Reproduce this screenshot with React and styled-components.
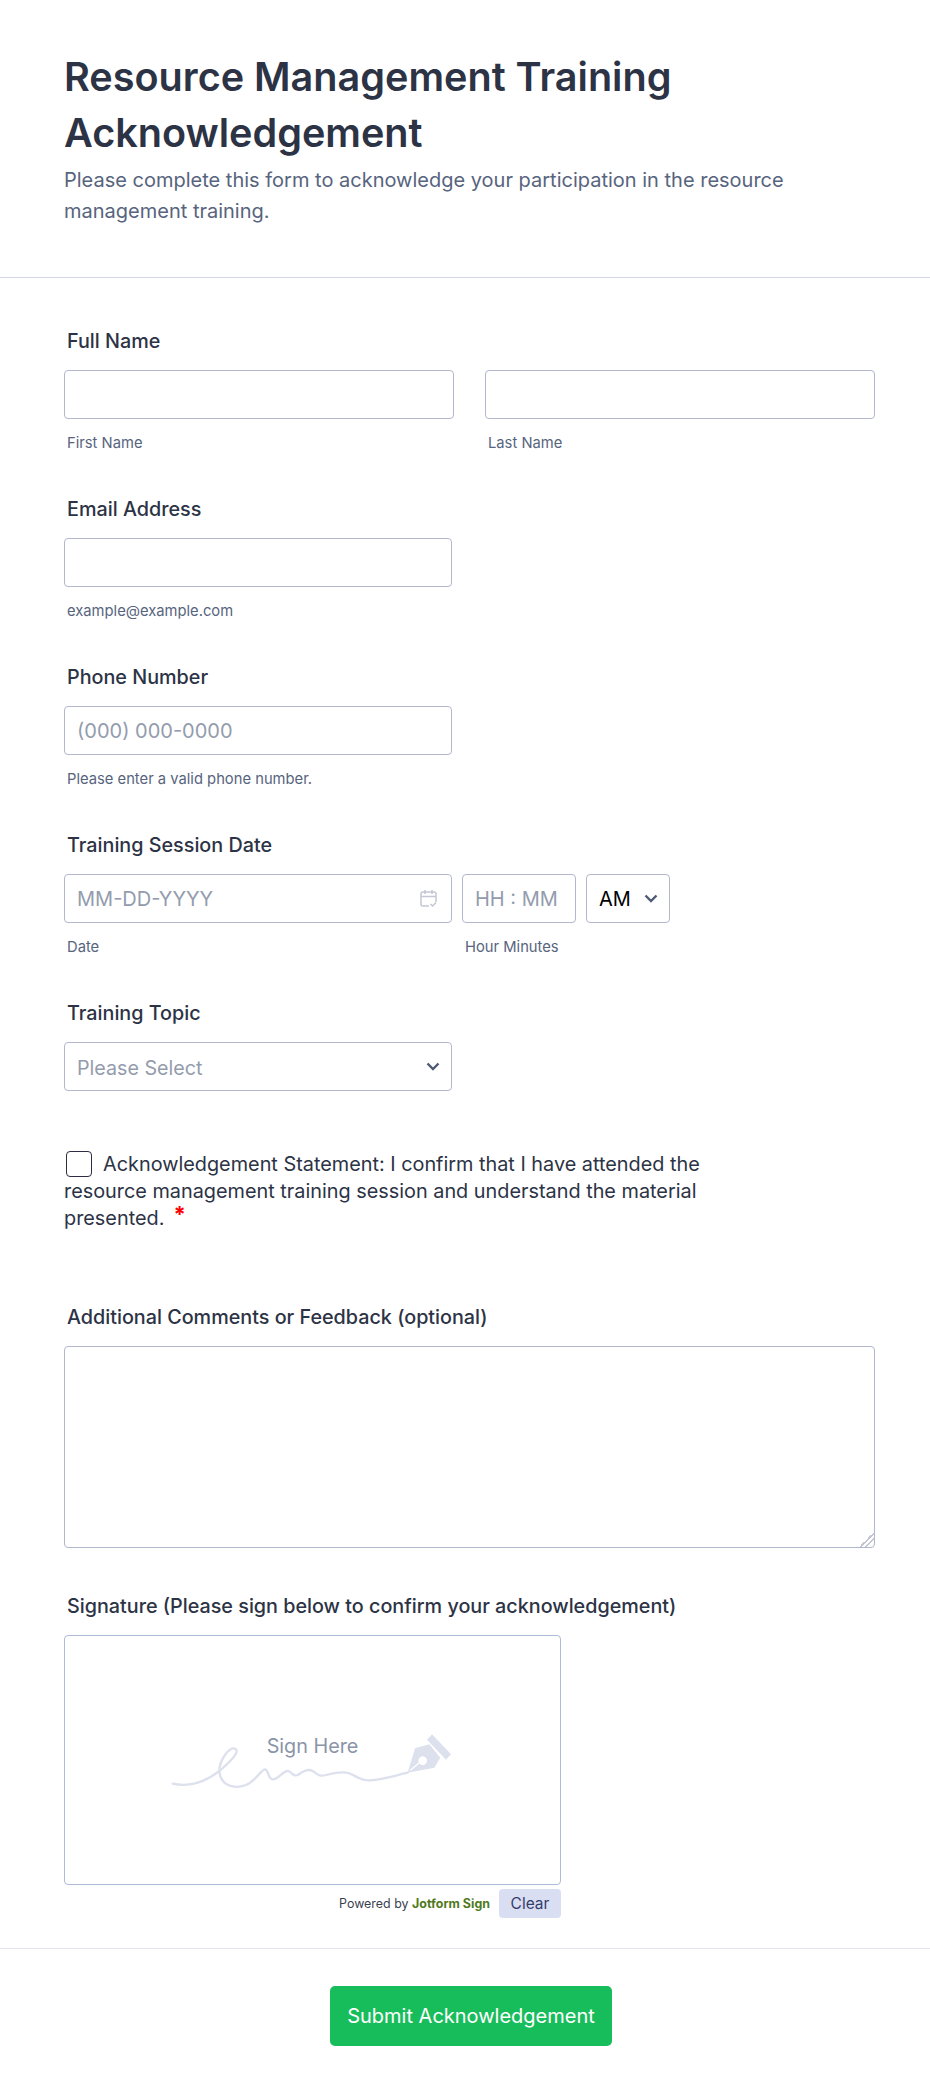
import React from "react";
import styled, { createGlobalStyle } from "styled-components";

const Global = createGlobalStyle`
  html, body { margin: 0; padding: 0; background: #fff; }
  body { font-family: Inter, "Liberation Sans", sans-serif; color: #2c3345; }
  * { box-sizing: border-box; }
`;
const Page = styled.div`width: 930px; height: 2095px; background: #fff; overflow: hidden;`;
const Header = styled.header`
  height: 278px; padding: 49px 64px 0; border-bottom: 1px solid #d3d6e6;
`;
const Title = styled.h1`
  margin: 0 0 4px; font-size: 39.6px; line-height: 56px; font-weight: 600; color: #2c3345; max-width: 760px;
`;
const Subtitle = styled.p`
  margin: 0; font-size: 20px; line-height: 31px; color: #57647e; max-width: 780px;
`;
const Form = styled.div`padding: 54px 55px 0 64px; display: flex; flex-direction: column;`;
const Field = styled.div`height: ${p => p.$h}px; display: flex; flex-direction: column;`;
const Label = styled.div`
  margin: 1px 0 20px 3px; height: 17px; font-size: 19.75px; line-height: 17px; font-weight: 500; color: #2c3345;
`;
const Row = styled.div`display: flex; gap: ${p => p.$gap || 10}px;`;
const Col = styled.div`display: flex; flex-direction: column; width: ${p => p.$w}px;`;
const Input = styled.input`
  width: 100%; height: 49px; border: 1px solid #b2b7cc;
  border-radius: 4px; padding: 0 12px; font: 20px Inter, sans-serif; background: #fff; color: #2c3345; outline: none;
  &::placeholder { color: #939cad; opacity: 1; }
`;
const Control = styled.div`
  position: relative; width: ${p => p.$w}px;
`;
const Sub = styled.div`
  margin: 15px 0 0 3px; font-size: 14.75px; line-height: 18px; color: #57647e;
`;
const CalIcon = styled.svg`position: absolute; right: 14px; top: 15px; width: 19px; height: 19px;`;
const Chevron = styled.svg`position: absolute; right: 12px; top: 20px; width: 14px; height: 9px;`;
const SelectBox = styled.select`
  width: 100%; height: 49px; border: 1px solid #b2b7cc; border-radius: 4px; padding: ${p => p.$dark ? 0 : 2}px 12px 0;
  font: ${p => p.$dark ? 20 : 19.7}px Inter, sans-serif; background: #fff; color: ${p => p.$dark ? "#000" : "#939cad"};
  appearance: none; outline: none;
`;
const AckBlock = styled.div`
  height: 171px; padding-top: 14px; width: 680px; font-size: 19.85px; line-height: 27px; color: #2c3345;
`;
const Box = styled.input`
  appearance: none; width: 26px; height: 26px; margin: 0 11px 0 2px; border: 1.5px solid #2c2c45; border-radius: 4px;
  vertical-align: -6px; background: #fff;
`;
const Req = styled.span`color: #f00; font-weight: 700; font-size: 22px; margin-left: 9px; line-height: 0; vertical-align: 3px;`;
const Area = styled.textarea`
  display: block; width: 811px; height: 202px; border: 1px solid #b2b7cc; border-radius: 4px; background: #fff; outline: none;
  &::-webkit-resizer {
    background: linear-gradient(135deg, transparent 50%, #c2c6d2 50%, #c2c6d2 57%, transparent 57%, transparent 67%, #c2c6d2 67%, #c2c6d2 74%, transparent 74%);
  }
`;
const Pad = styled.div`
  width: 497px; height: 250px; border: 1px solid #aebbd6; border-radius: 4px;
  display: flex; align-items: center; justify-content: center; padding: 11px 4px 0 0;
`;
const Scribble = styled.div`position: relative; width: 320px; height: 110px;`;
const SignHere = styled.span`
  position: absolute; left: 162px; top: 35px; transform: translate(-50%, -50%); font-size: 19.8px; color: #8a94a8; white-space: nowrap;
`;
const PadFoot = styled.div`
  width: 497px; margin-top: 4px; display: flex; justify-content: flex-end; align-items: center; gap: 9px;
`;
const Powered = styled.span`font-size: 12.45px; color: #3a3f50;`;
const Brand = styled.b`color: #4f7a1c; font-weight: 700;`;
const Clear = styled.button`
  width: 62px; height: 29px; border: 0; border-radius: 4px; background: #dadef3; color: #343c6a;
  font: 15.5px Inter, sans-serif; padding: 0;
`;
const Footer = styled.footer`
  margin-top: 30px; border-top: 1px solid #e3e5f0; display: flex; justify-content: center; padding: 37px 0 0 12px;
`;
const Submit = styled.button`
  width: 282px; height: 60px; border: 0; border-radius: 5px; background: #18bd5b; color: #fff;
  font: 400 20px Inter, sans-serif; padding: 0;
`;

const Down = () => (
  <Chevron viewBox="0 0 14 9" fill="none"><path d="M1.5 1.5 L7 7 L12.5 1.5" stroke="#4f5a74" strokeWidth="2.4" /></Chevron>
);

export default function App() {
  return (
    <Page>
      <Global />
      <Header>
        <Title>Resource Management Training Acknowledgement</Title>
        <Subtitle>Please complete this form to acknowledge your participation in the resource management training.</Subtitle>
      </Header>
      <Form>
        <Field $h={168}>
          <Label>Full Name</Label>
          <Row $gap={31}>
            <Col $w={390}><Input /><Sub>First Name</Sub></Col>
            <Col $w={390}><Input /><Sub>Last Name</Sub></Col>
          </Row>
        </Field>
        <Field $h={168}>
          <Label>Email Address</Label>
          <Col $w={388}><Input /><Sub>example@example.com</Sub></Col>
        </Field>
        <Field $h={168}>
          <Label>Phone Number</Label>
          <Col $w={388}><Input placeholder="(000) 000-0000" /><Sub>Please enter a valid phone number.</Sub></Col>
        </Field>
        <Field $h={168}>
          <Label>Training Session Date</Label>
          <Row $gap={10}>
            <Col $w={388}>
              <Control $w={388}>
                <Input placeholder="MM-DD-YYYY" />
                <CalIcon viewBox="0 0 19 19" fill="none" stroke="#c3c8d4" strokeWidth="1.5">
                  <path d="M2 6.5V15a2 2 0 0 0 2 2h6M2 6.5V5a2 2 0 0 1 2-2h11a2 2 0 0 1 2 2v8M2 7.5h15M6 1v4M13 1v4" />
                  <path d="M11.5 15l2 2 3.5-3.5" />
                </CalIcon>
              </Control>
              <Sub>Date</Sub>
            </Col>
            <Col $w={114}><Input placeholder="HH : MM" /><Sub>Hour Minutes</Sub></Col>
            <Control $w={84}>
              <SelectBox $dark defaultValue="AM"><option>AM</option><option>PM</option></SelectBox>
              <Down />
            </Control>
          </Row>
        </Field>
        <Field $h={133}>
          <Label>Training Topic</Label>
          <Control $w={388}>
            <SelectBox defaultValue="Please Select"><option>Please Select</option></SelectBox>
            <Down />
          </Control>
        </Field>
        <AckBlock>
          <Box type="checkbox" aria-label="Acknowledgement" />
          Acknowledgement Statement: I confirm that I have attended the resource management training session and understand the material presented.<Req>*</Req>
        </AckBlock>
        <Field $h={289}>
          <Label>Additional Comments or Feedback (optional)</Label>
          <Area />
        </Field>
        <Label>Signature (Please sign below to confirm your acknowledgement)</Label>
        <Pad>
          <Scribble>
            <svg width="320" height="110" viewBox="0 0 960 330" fill="none">
              <path d="M65 218 C110 228 160 215 205 180 C235 155 265 125 255 115 C235 100 205 150 205 180 C208 225 250 235 285 222 C315 210 330 175 342 175 C355 178 350 205 365 205 C385 205 395 178 412 180 C425 185 425 198 440 192 C455 182 470 172 485 180 C500 190 505 198 525 192 C545 186 560 182 585 185 C610 188 625 210 655 208 C695 206 730 194 770 185" stroke="#dde1ee" strokeWidth="7" strokeLinecap="round" />
              <path fillRule="evenodd" d="M770 185 L792 112 L835 100 L868 140 L850 170 Z M815 136 a13 13 0 1 0 .1 0 Z" fill="#dde1ee" />
              <path d="M778 178 L805 155" stroke="#fff" strokeWidth="4" />
              <path d="M843 70 L900 130 L885 146 L828 86 Z" fill="#dde1ee" />
            </svg>
            <SignHere>Sign Here</SignHere>
          </Scribble>
        </Pad>
        <PadFoot>
          <Powered>Powered by <Brand>Jotform Sign</Brand></Powered>
          <Clear>Clear</Clear>
        </PadFoot>
      </Form>
      <Footer><Submit>Submit Acknowledgement</Submit></Footer>
    </Page>
  );
}
